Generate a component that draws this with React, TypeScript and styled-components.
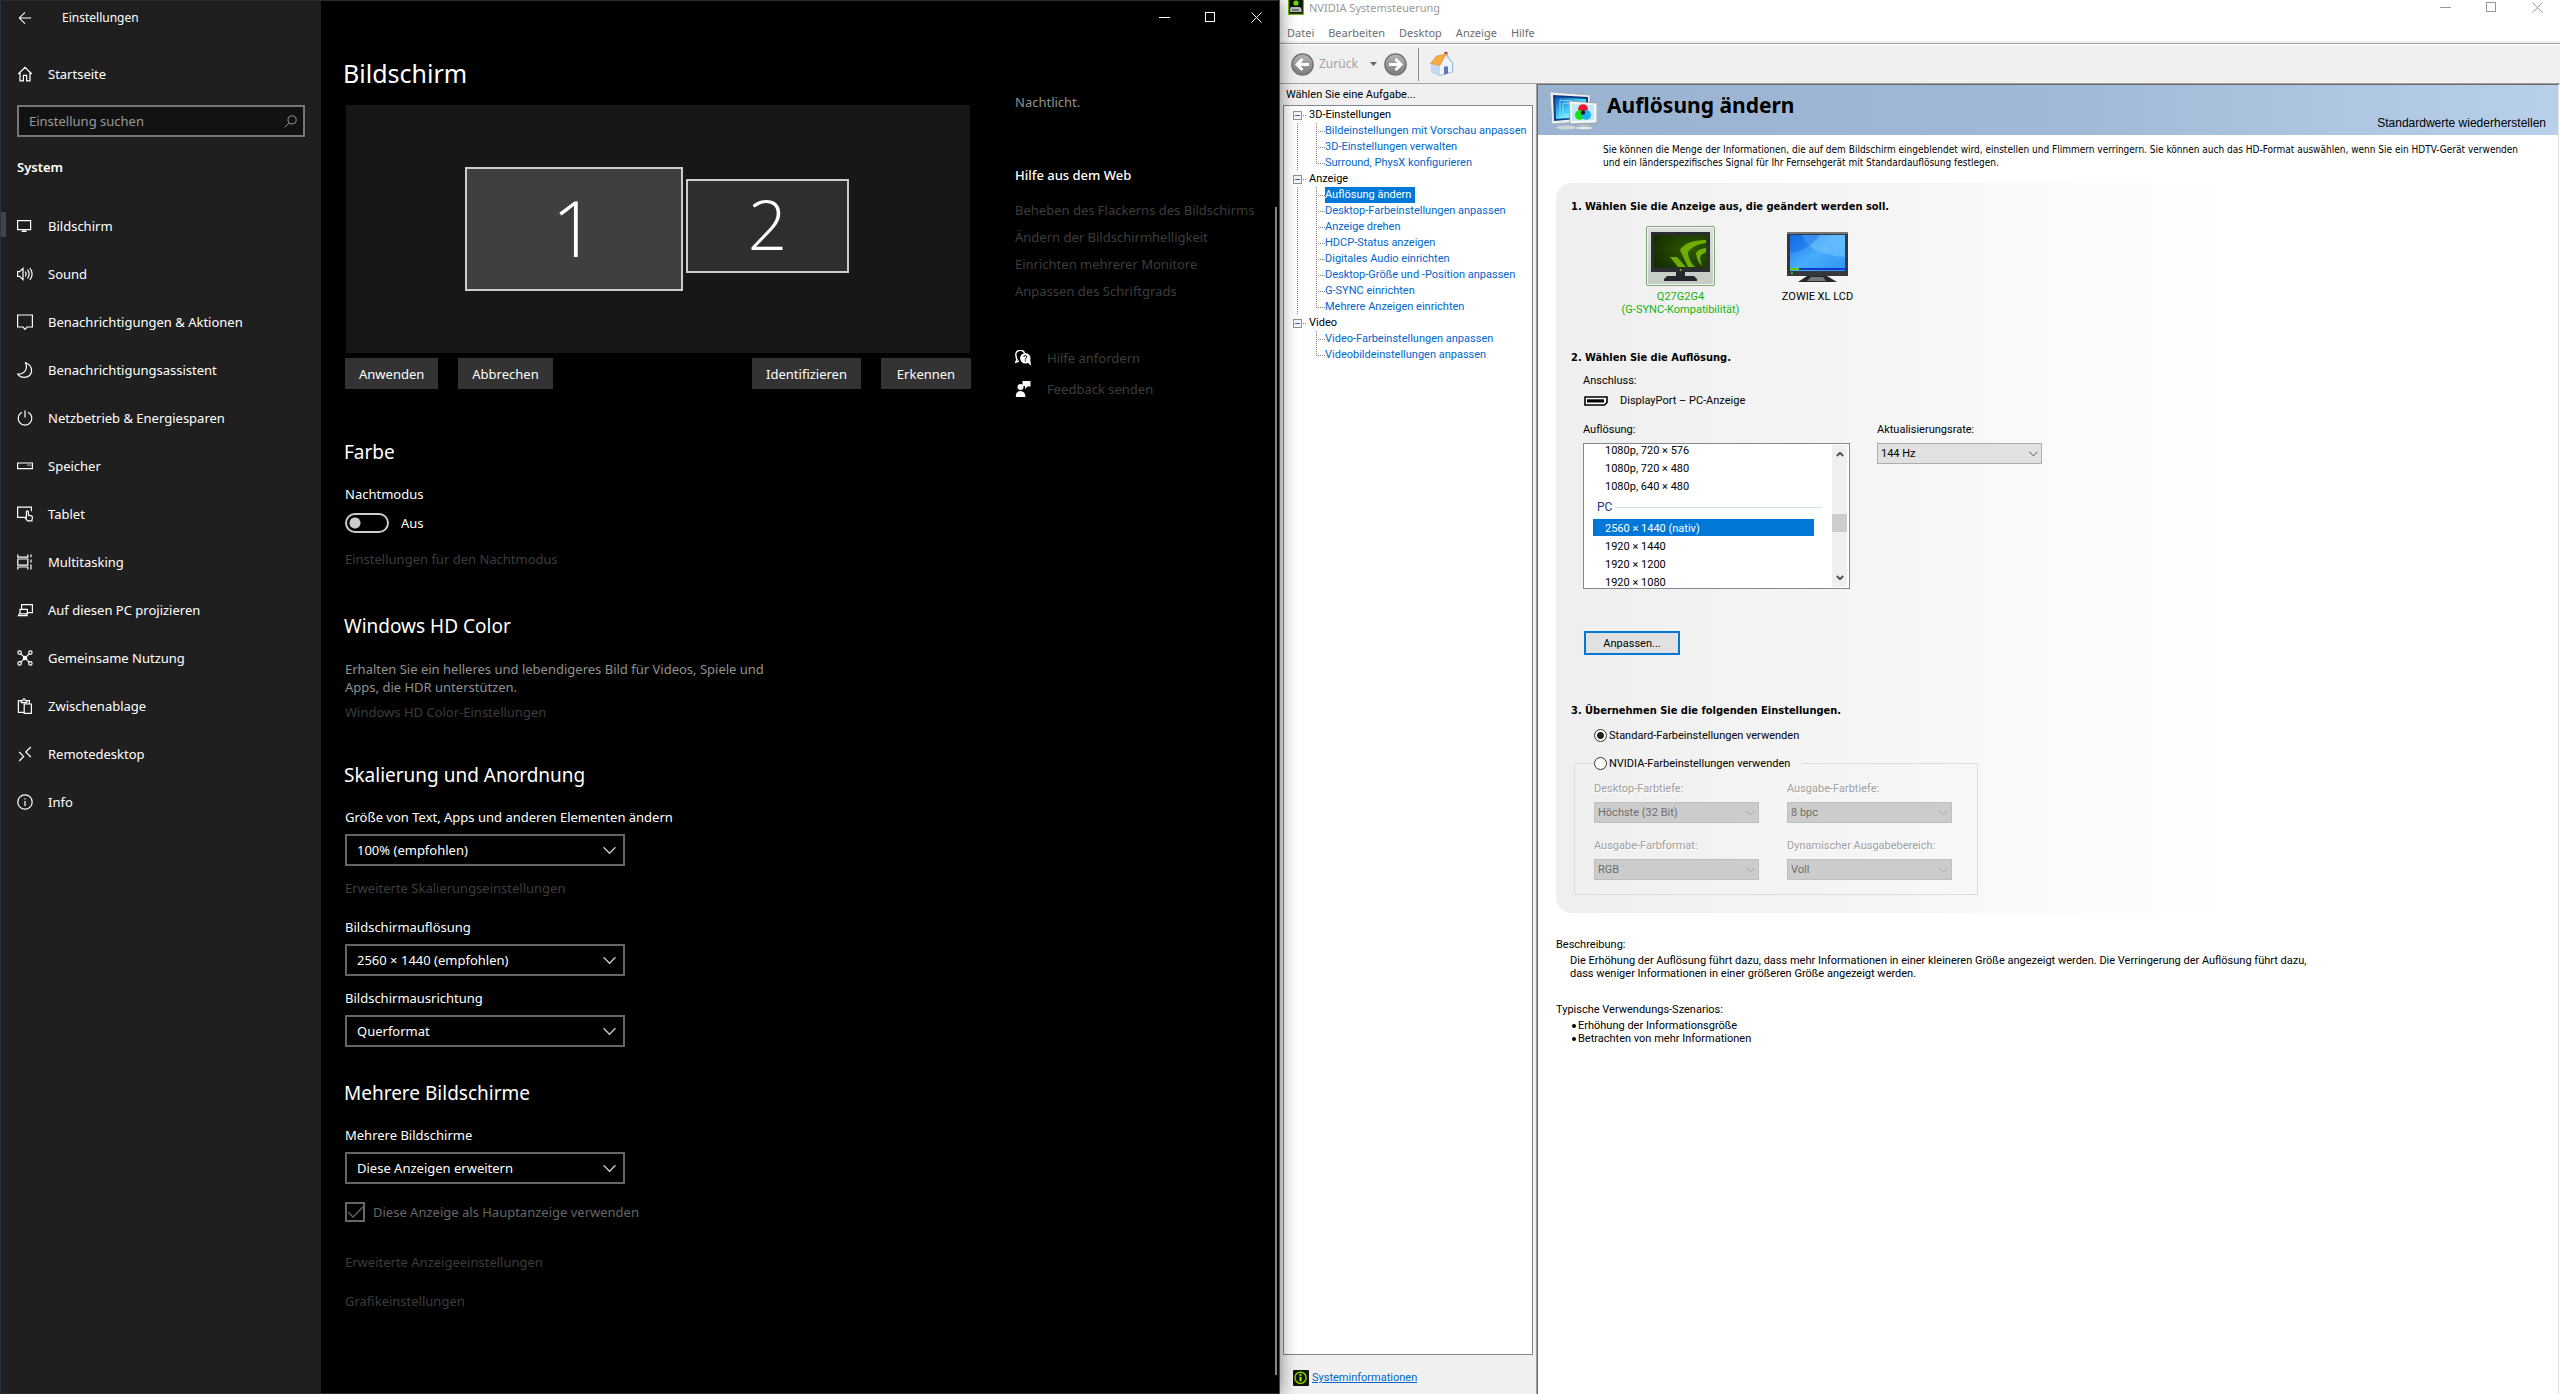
import React from "react";
import styled, { createGlobalStyle, css } from "styled-components";

const segoe = `"Noto Sans", "Open Sans", sans-serif`;
const tahoma = `Roboto, "DejaVu Sans Condensed", sans-serif`;
const tahomaAlt = `"DejaVu Sans Condensed", "DejaVu Sans", sans-serif`;
const sansSerif = `"Liberation Sans", Arial, sans-serif`;

const GlobalStyle = createGlobalStyle`
  *, *::before, *::after { box-sizing: border-box; }
  body { margin: 0; background: #fff; }
  h1, h2, h3, p, ul, fieldset, legend { margin: 0; padding: 0; font-size: inherit; font-weight: 400; }
  ul { list-style: none; }
  button, input, select { font: inherit; color: inherit; margin: 0; }
  svg { display: block; flex: none; }
`;

const Desktop = styled.div`
  display: grid;
  grid-template-columns: 1fr 1fr;
  min-height: 100vh;
`;

/* ---------- Settings window ---------- */

const SettingsWindow = styled.div`
  position: relative;
  z-index: 1;
  display: flex;
  background: #000;
  color: #fff;
  border-top: 1px solid #2b2b2b;
  border-right: 1px solid #4a4a4a;
  border-bottom: 1px solid #2b2b2b;
  box-shadow: 0 0 16px rgba(0, 0, 0, 0.5);
  font: 13px/20px ${segoe};
`;

const Sidebar = styled.aside`
  flex: none;
  width: 321px;
  background: #1f1f1f;
  border-left: 1px solid #2c3340;
`;

const SidebarTop = styled.div`
  display: flex;
  align-items: center;
  gap: 30px;
  height: 34px;
  padding-left: 17px;
  font-size: 12px;
`;

const IconButton = styled.button`
  display: flex;
  align-items: center;
  justify-content: center;
  padding: 0;
  border: 0;
  background: none;
`;

const SideLink = styled.a<{ $active?: boolean }>`
  display: flex;
  align-items: center;
  gap: 15px;
  height: 48px;
  padding-left: 11px;
  border-left: 5px solid transparent;
  color: #fff;
  text-decoration: none;
  ${(p) =>
    p.$active &&
    css`
      border-image: linear-gradient(transparent 11px, #444 11px 35px, transparent 35px) 1 / 0 0 0 5px;
    `}
`;

const HomeBlock = styled.div`
  padding: 15px 0 7px;
`;

const Search = styled.label`
  display: flex;
  align-items: center;
  height: 32px;
  margin: 0 16px;
  padding: 0 6px 0 10px;
  border: 2px solid #767676;
  background: #121212;
  color: #999;

  input {
    flex: 1;
    min-width: 0;
    padding: 0;
    border: 0;
    outline: 0;
    background: none;
  }
  input::placeholder {
    color: #999;
    opacity: 1;
  }
`;

const SideHeading = styled.h2`
  margin: 20px 16px 25px;
  font-weight: 600;
`;

const SettingsMain = styled.main`
  position: relative;
  flex: 1;
  min-width: 0;
`;

const WindowControls = styled.div<{ $color: string; $height: number }>`
  display: flex;
  justify-content: flex-end;
  height: ${(p) => p.$height}px;
  color: ${(p) => p.$color};

  button {
    width: 46px;
  }
`;

const SettingsBody = styled.div`
  display: flex;
  gap: 44px;
  padding-left: 24px;
`;

const SettingsContent = styled.div`
  flex: 0 1 626px;
  padding-top: 22px;
`;

const PageTitle = styled.h1`
  margin-left: -2px;
  font-size: 25px;
  line-height: 36px;
`;

const Canvas = styled.div`
  display: flex;
  align-items: center;
  justify-content: center;
  gap: 3px;
  height: 248px;
  margin: 14px 1px 5px;
  padding-right: 2px;
  background: #171717;
`;

const Display = styled.button<{ $primary?: boolean }>`
  width: ${(p) => (p.$primary ? 218 : 163)}px;
  height: ${(p) => (p.$primary ? 124 : 94)}px;
  margin-bottom: ${(p) => (p.$primary ? 0 : 7)}px;
  padding: 0 0 5px;
  border: 2px solid #ccc;
  background: ${(p) => (p.$primary ? "#3f3f3f" : "#2e2e2e")};
  color: #fff;
  font: 300 ${(p) => (p.$primary ? 78 : 69)}px/80px "Open Sans", ${segoe};
`;

const ButtonRow = styled.div`
  display: flex;
  gap: 20px;
`;

const Spacer = styled.span`
  flex: 1;
`;

const DarkButton = styled.button`
  min-width: 90px;
  height: 31px;
  padding: 0 14px;
  border: 0;
  background: #333;
`;

const SectionTitle = styled.h2<{ $top: number }>`
  margin-top: ${(p) => p.$top}px;
  margin-bottom: 19px;
  margin-left: -1px;
  font-size: 19px;
  line-height: 26px;
`;

const ToggleRow = styled.label`
  display: flex;
  align-items: center;
  gap: 12px;
  height: 20px;
  margin-top: 9px;
`;

const Toggle = styled.input`
  appearance: none;
  width: 44px;
  height: 20px;
  border: 2px solid #ccc;
  border-radius: 10px;
  background: radial-gradient(circle at 8px 8px, #ccc 5px, transparent 6px);
`;

const Muted = styled.p`
  padding-top: 2px;
  color: #929292;
  line-height: 18px;
`;

const QuietLink = styled.a<{ $top?: number }>`
  display: block;
  width: fit-content;
  margin-top: ${(p) => p.$top ?? 0}px;
  color: #3d3d3d;
  text-decoration: none;
`;

const DarkField = styled.label<{ $top?: number }>`
  display: block;
  margin-top: ${(p) => p.$top ?? 0}px;
`;

const DarkSelectBox = styled.span`
  position: relative;
  display: block;
  width: 280px;
  margin-top: 7px;

  select {
    appearance: none;
    display: block;
    width: 100%;
    height: 32px;
    padding: 0 36px 0 10px;
    border: 2px solid #666;
    border-radius: 0;
    background: #000;
  }
  svg {
    position: absolute;
    top: 12px;
    right: 9px;
    pointer-events: none;
    color: #ccc;
  }
`;

const CheckRow = styled.label`
  display: flex;
  align-items: center;
  gap: 8px;
  margin: 18px 0 30px;
  color: #666;
`;

const CheckBox = styled.span`
  position: relative;
  width: 20px;
  height: 20px;

  input {
    appearance: none;
    display: block;
    width: 20px;
    height: 20px;
    border: 2px solid #666;
  }
  svg {
    position: absolute;
    top: 0;
    left: 0;
  }
`;

const Help = styled.aside`
  flex: 1;
  padding-top: 58px;
`;

const HelpTitle = styled.h2`
  margin: 54px 0 15px;
  font-weight: 500;
`;

const HelpLinks = styled.div`
  display: grid;
  gap: 7px;
  margin-bottom: 47px;
`;

const HelpAction = styled.div`
  display: flex;
  align-items: center;
  gap: 16px;
  margin-bottom: 11px;
`;

const ScrollThumb = styled.div`
  position: absolute;
  top: 206px;
  right: 2px;
  bottom: 18px;
  width: 2px;
  background: #858585;
`;

/* ---------- Control panel window ---------- */

const PanelWindow = styled.div`
  display: flex;
  flex-direction: column;
  min-width: 0;
  background: #fff;
  color: #000;
  font: 11px/13px ${tahoma};
`;

const TitleBar = styled.header`
  display: flex;
  justify-content: space-between;
  height: 24px;
  padding-left: 8px;
  font: 11px/16px ${segoe};
  color: #999;
`;

const TitleText = styled.div`
  display: flex;
  gap: 5px;
`;

const MenuBar = styled.nav`
  display: flex;
  gap: 14px;
  height: 19px;
  padding-left: 7px;
  border-bottom: 2px solid #f0f0f0;
  font: 11px/17px ${segoe};

  button {
    padding: 0;
    border: 0;
    background: none;
    color: #6d6d6d;
  }
`;

const ToolBar = styled.div`
  display: flex;
  align-items: center;
  height: 41px;
  padding: 1px 11px 0;
  border-top: 1px solid #a0a0a0;
  border-bottom: 1px solid #a0a0a0;
  box-shadow: inset 0 1px #fff;
  background: #f0f0f0;
  color: #a0a0a0;
  font: 12px/18px ${segoe};
`;

const BackLabel = styled.span`
  margin: 0 12px 0 5px;
`;

const HistoryArrow = styled.svg`
  margin-right: 7px;
`;

const ToolSeparator = styled.span`
  width: 1px;
  height: 33px;
  margin: 0 11px;
  background: #8c8c8c;
`;

const PanelBody = styled.div`
  flex: 1;
  display: flex;
`;

const TaskColumn = styled.aside`
  flex: none;
  display: flex;
  flex-direction: column;
  width: 256px;
  padding: 0 3px;
  background: #f0f0f0;
`;

const TaskTitle = styled.h2`
  padding: 4px 3px 4px;
`;

const Tree = styled.ul`
  flex: 1;
  border: 1px solid #828790;
  background: #fff;
  padding-top: 1px;
`;

const TreeHead = styled.div`
  display: flex;
  align-items: center;
  height: 16px;
  padding-left: 9px;
  line-height: 16px;
`;

const Expander = styled.button`
  width: 9px;
  height: 9px;
  margin-right: 1px;
  padding: 0;
  border: 1px solid #919191;
  background: linear-gradient(#3a5bb0, #3a5bb0) center / 5px 1px no-repeat #f6f6f6;
`;

const HeadDots = styled.span`
  width: 3px;
  height: 1px;
  margin-right: 3px;
  background: repeating-linear-gradient(90deg, #808080 0 1px, transparent 1px 2px);
`;

const Branch = styled.ul<{ $trunk: boolean }>`
  ${(p) =>
    p.$trunk &&
    css`
      background: repeating-linear-gradient(#808080 0 1px, transparent 1px 2px) 13px 0 / 1px 100% no-repeat;
    `}
`;

const Leaf = styled.li`
  height: 16px;
  padding-left: 41px;
  line-height: 16px;
  background:
    repeating-linear-gradient(#808080 0 1px, transparent 1px 2px) 32px 0 / 1px 100% no-repeat,
    repeating-linear-gradient(90deg, #808080 0 1px, transparent 1px 2px) 34px 8px / 7px 1px no-repeat;

  &:last-child {
    background-size: 1px 9px, 7px 1px;
  }
`;

const LeafLink = styled.a<{ $selected?: boolean }>`
  display: block;
  width: fit-content;
  padding-right: 4px;
  color: ${(p) => (p.$selected ? "#fff" : "#0066cc")};
  background: ${(p) => (p.$selected ? "#0078d7" : "none")};
  text-decoration: none;
  white-space: nowrap;
`;

const SystemInfo = styled.div`
  display: flex;
  align-items: center;
  gap: 3px;
  height: 39px;
  padding: 6px 10px 0;

  a {
    color: #0066cc;
  }
`;

const Page = styled.main`
  flex: 1;
  min-width: 0;
  margin: 0 1px;
  border-top: 1px solid #696969;
  border-right: 1px solid #e3e3e3;
  border-left: 1px solid #696969;
  box-shadow: -1px 0 #a0a0a0;
`;

const Banner = styled.header`
  display: flex;
  align-items: flex-start;
  gap: 10px;
  height: 50px;
  padding: 6px 12px 0;
  background: linear-gradient(90deg, #9ab3d1, #9fb8d5 50%, #b9d0eb);
`;

const BannerTitle = styled.h1`
  flex: 1;
  font: 700 21px/28px "Noto Sans", sans-serif;
`;

const RestoreButton = styled.button`
  align-self: flex-end;
  padding: 0 0 5px;
  border: 0;
  background: none;
  font: 12px/14px ${sansSerif};
`;

const Intro = styled.p`
  padding: 8px 0 14px 65px;
  font: 10px/13px ${tahomaAlt};
`;

const Steps = styled.section`
  margin-left: 18px;
  padding: 17px 15px 18px;
  border-radius: 16px;
  background: linear-gradient(90deg, #efefef, #f5f5f5 30%, #fff 68%);
`;

const StepTitle = styled.h2<{ $top?: number }>`
  margin-top: ${(p) => p.$top ?? 0}px;
  font: 700 11px/13px ${tahomaAlt};
`;

const StepBody = styled.div`
  padding: 10px 0 0 12px;
`;

const Monitors = styled.div`
  display: flex;
  padding: 13px 0 0 41px;
  height: 103px;
`;

const MonitorChoice = styled.button<{ $active?: boolean }>`
  display: flex;
  flex-direction: column;
  align-items: center;
  gap: 4px;
  width: 137px;
  padding: 0;
  border: 0;
  background: none;
  color: ${(p) => (p.$active ? "#12b212" : "#000")};
`;

const MonitorFrame = styled.span<{ $active?: boolean }>`
  display: flex;
  align-items: center;
  justify-content: center;
  width: 69px;
  height: 60px;
  border: 1px solid ${(p) => (p.$active ? "#7fa573" : "transparent")};
  border-radius: 2px;
  background: ${(p) => (p.$active ? "linear-gradient(#dcdedc, #c3cbc3)" : "none")};
  box-shadow: ${(p) => (p.$active ? "inset 0 0 0 1px #f4f6f4" : "none")};
`;

const Connector = styled.div`
  display: flex;
  align-items: center;
  gap: 12px;
  margin: 7px 0 16px;
  padding-left: 1px;
`;

const Columns = styled.div<{ $gap: number }>`
  display: flex;
  align-items: flex-start;
  gap: ${(p) => p.$gap}px;
`;

const FieldLabel = styled.div`
  margin-bottom: 7px;
`;

const ListBox = styled.div`
  display: flex;
  width: 267px;
  height: 146px;
  padding-right: 2px;
  border: 1px solid #828790;
  background: #fff;
`;

const ListItems = styled.div`
  flex: 1;
  display: flex;
  flex-direction: column;
  justify-content: center;
  overflow: hidden;
`;

const Option = styled.div<{ $selected?: boolean }>`
  flex: none;
  height: 17px;
  margin: 0 18px 1px 9px;
  padding-left: 12px;
  line-height: 20px;
  color: ${(p) => (p.$selected ? "#fff" : "#000")};
  background: ${(p) => (p.$selected ? "#0078d7" : "none")};
`;

const GroupName = styled.div`
  flex: none;
  display: flex;
  align-items: center;
  gap: 4px;
  height: 24px;
  padding: 0 10px 0 13px;
  color: #1e3287;
  font-size: 12px;

  &::after {
    content: "";
    flex: 1;
    height: 1px;
    background: #d5dfea;
  }
`;

const ListScroll = styled.div`
  display: flex;
  flex-direction: column;
  align-items: center;
  width: 15px;
  margin: 1px 0;
  padding: 6px 0;
  background: #f0f0f0;
  color: #505050;
`;

const ListThumb = styled.span`
  width: 15px;
  height: 18px;
  margin: 57px 0 auto;
  background: #cdcdcd;
`;

const LightField = styled.label`
  display: block;
  width: 165px;
`;

const LightSelectBox = styled.span<{ $disabled?: boolean }>`
  position: relative;
  display: block;

  select {
    appearance: none;
    display: block;
    width: 100%;
    height: 21px;
    padding: 0 20px 0 3px;
    border: 1px solid ${(p) => (p.$disabled ? "#bfbfbf" : "#adadad")};
    border-radius: 0;
    background: ${(p) => (p.$disabled ? "#ccc" : "#e1e1e1")};
    color: ${(p) => (p.$disabled ? "#6d6d6d" : "#000")};
    opacity: 1;
  }
  svg {
    position: absolute;
    top: 8px;
    right: 4px;
    pointer-events: none;
    color: ${(p) => (p.$disabled ? "#a3a3a3" : "#444")};
  }
`;

const CustomizeButton = styled.button`
  width: 96px;
  height: 24px;
  margin: 42px 1px 0;
  padding: 0;
  border: 2px solid #0078d7;
  background: #e1e1e1;
`;

const RadioLabel = styled.label`
  display: flex;
  align-items: center;
  gap: 2px;
  height: 13px;
`;

const Radio = styled.input`
  appearance: none;
  width: 13px;
  height: 13px;
  border: 1px solid #333;
  border-radius: 50%;
  background: #fff;

  &:checked {
    background: radial-gradient(circle, #222 3px, #fff 4px);
  }
`;

const DefaultRadio = styled.div`
  padding: 12px 0 15px 23px;
`;

const ColorGroup = styled.fieldset`
  width: 404px;
  margin-left: 3px;
  padding: 0 19px 14px;
  border: 1px solid #dcdcdc;

  legend {
    padding-right: 12px;
  }
`;

const ColorGrid = styled.div`
  display: grid;
  grid-template-columns: 165px 165px;
  gap: 16px 28px;
  padding-top: 12px;

  ${FieldLabel} {
    color: #a0a0a0;
    text-shadow: 1px 1px #fff;
  }
`;

const Notes = styled.section`
  padding: 25px 18px 0;

  p {
    max-width: 780px;
    padding: 3px 0 23px 14px;
  }
  ul {
    padding: 3px 0 0 16px;
  }
  li {
    display: flex;
    align-items: center;
    gap: 2px;
  }
  li::before {
    content: "";
    width: 4px;
    height: 4px;
    border-radius: 50%;
    background: #000;
  }
`;

/* ---------- Icons ---------- */

const LineIcon = ({ children, size = 16 }: { children: React.ReactNode; size?: number }) => (
  <svg width={size} height={size} viewBox="0 0 16 16" fill="none" stroke="currentColor" strokeWidth="1.2" aria-hidden="true">
    {children}
  </svg>
);

const icons: Record<string, React.ReactNode> = {
  display: <path d="M.6 2.6h13v9H.6zM4.600 13.400h5M7.100 11.600v1.800" />,
  sound: <path d="M.6 5.6h2L6 2.4v11.2l-3.4-3.2h-2zM8.3 5.6q1.6 2.4 0 4.8M10.6 3.7q3 4.3 0 8.6M12.9 2q4.4 6 0 12" />,
  notify: <path d="M.6 1h14.8v12H10l-2 2.4L6 13H.6z" />,
  moon: <path d="M8.6.8C17 4 16.500 15 7 15.400 4 15.400 2 14 .8 12.200 8 12 11 7 8.600.8z" />,
  power: <path d="M5 2.200a6.800 6.800 0 1 0 6 0M8 .4v7.200" />,
  storage: <path d="M.6 5h14.800v5.600H.6zM10.400 7.200h1.200M12.600 7.200h1.200" />,
  tablet: <path d="M7 11.400H.6V1.200h13.800v4M9.400 12.200V6q0-1.200 1-1.200t1 1.200v3.200l3 .6q1.100.4 1 1.500l-.5 3.600h-4.200L7.600 11.400q1-.7 1.800.8z" />,
  multi: <path d="M.8.6v2.600h10V.6M.8 5h10v6.200H.8zM.8 15.600V13h10v2.600M14 .6v2.600M14 5.400v3M14 10.600v5" />,
  project: <path d="M4.600 7V2.600h10.800v8h-5M3 7.400h7.400v4.400H3zM1.400 13.600H10l-1-1.800H2.400z" />,
  share: (
    <>
      <path d="M3.600 3.600 12.400 12.400M12.400 3.600 3.600 12.400" />
      <circle cx="2.600" cy="2.600" r="1.700" />
      <circle cx="13.400" cy="2.600" r="1.700" />
      <circle cx="2.600" cy="13.400" r="1.700" />
      <circle cx="13.400" cy="13.400" r="1.700" />
      <circle cx="8" cy="8" r="1.600" />
    </>
  ),
  clipboard: <path d="M7 14.400H1.400V2.600h2.800v2h5.600v-2h2.600V6M4.400 2.600h1.400Q6 .6 7 .6t1.200 2h1.600M7.200 6h7.200v9.400H7.200z" />,
  remote: <path d="M2.200 6 6.600 10.400 2.200 15M13.800 1 8.800 6l5 5" />,
  info: (
    <>
      <circle cx="8" cy="8" r="7.200" />
      <path d="M8 7v5M8 4.200v1.200" />
    </>
  ),
};

const BackArrow = () => (
  <LineIcon size={14}>
    <path d="M15 8H1.500M8 1.500 1.500 8 8 14.500" />
  </LineIcon>
);

const Controls = ({ color, height }: { color: string; height: number }) => (
  <WindowControls $color={color} $height={height}>
    <IconButton aria-label="Minimieren">
      <svg width="11" height="11" shapeRendering="crispEdges" aria-hidden="true"><path d="M0 5.500h11" stroke="currentColor" /></svg>
    </IconButton>
    <IconButton aria-label="Maximieren">
      <svg width="11" height="11" fill="none" shapeRendering="crispEdges" aria-hidden="true"><path d="M.5.5h9v9h-9z" stroke="currentColor" /></svg>
    </IconButton>
    <IconButton aria-label="Schließen">
      <svg width="11" height="11" aria-hidden="true"><path d="M.5.5l10 10M10.500.5l-10 10" stroke="currentColor" /></svg>
    </IconButton>
  </WindowControls>
);

const HelpIcon = () => (
  <svg width="16" height="16" viewBox="0 0 16 16" aria-hidden="true">
    <path d="M9.500 3A4.500 4.500 0 0 0 1.200 6.500Q1.200 8.400 2 9.400L.8 12.200 4 11" fill="none" stroke="#fff" strokeWidth="1.500" />
    <circle cx="10.300" cy="8.200" r="5.200" fill="#fff" />
    <path d="m12 12 4 3.800-.6-5.500z" fill="#fff" />
    <path d="M8.800 7q0-1.500 1.500-1.500T11.800 7q0 .9-1.500 1.700v.8M10.300 10.300v1.200" fill="none" stroke="#000" />
  </svg>
);

const FeedbackIcon = () => (
  <svg width="16" height="16" viewBox="0 0 16 16" fill="#fff" aria-hidden="true">
    <path d="M7.500 0h8v5.500h-3L10 8V5H7.500z" />
    <circle cx="5.500" cy="6" r="3" />
    <path d="M.8 16q0-6 4.700-6t5 6z" />
  </svg>
);

const Chevron = ({ width, height }: { width: number; height: number }) => (
  <svg width={width} height={height} viewBox="0 0 12 8" fill="none" stroke="currentColor" strokeWidth="1.200" aria-hidden="true">
    <path d="M.5 1 6 6.500 11.500 1" />
  </svg>
);

const RoundArrow = ({ forward }: { forward?: boolean }) => (
  <svg width="23" height="23" viewBox="0 0 23 23" aria-hidden="true">
    <defs>
      <linearGradient id="steel" x1="0" y1="0" x2="0" y2="1">
        <stop offset="0" stopColor="#b5b5b5" />
        <stop offset="1" stopColor="#7b7b7b" />
      </linearGradient>
    </defs>
    <circle cx="11.500" cy="11.500" r="10.600" fill="url(#steel)" stroke="#707070" strokeWidth="1.400" />
    <path
      d={forward ? "M5 11.500h12M11.500 6l5.500 5.500-5.500 5.500" : "M18 11.500H6M11.500 6 6 11.500l5.500 5.500"}
      fill="none"
      stroke="#fff"
      strokeWidth="3"
    />
  </svg>
);

const HouseIcon = () => (
  <svg width="24" height="24" viewBox="0 0 24 24" aria-hidden="true">
    <path d="M14.500 0h3v7h-3z" fill="#b8341c" />
    <path d="M2 12v8l8 3.500 12.500-3.500v-9L16 3z" fill="#eef4fd" stroke="#8aa6d4" strokeWidth=".8" />
    <path d="M2 12v8l8 3.500V13z" fill="#c3d8f5" />
    <path d="M14 14.500h4v7l-4 1.100z" fill="#5a78b4" />
    <path d="M.5 11.500 6.500 4 16 2 10 13.500z" fill="#f8ab42" stroke="#e08a22" strokeWidth=".6" />
    <path d="M16 2l7.500 10.500" stroke="#b9c7dd" strokeWidth="1.400" />
  </svg>
);

const AppIcon = () => (
  <svg width="16" height="15" viewBox="0 0 16 15" aria-hidden="true">
    <path d="M0-3h16v18H0z" fill="#6cb800" />
    <path d="M1.200-3h13.600v16.700H1.200z" fill="#111" />
    <circle cx="8" cy="3" r="2.600" fill="#5fe000" />
    <path d="M3 7h9l1.500 2v3H2V9z" fill="#bbb" />
    <path d="M4 9.500h7v1H4z" fill="#333" />
  </svg>
);

const InfoBadge = () => (
  <svg width="16" height="16" viewBox="0 0 16 16" aria-hidden="true">
    <rect width="16" height="16" rx="1" fill="#10160a" />
    <circle cx="7.500" cy="7.800" r="5.600" fill="none" stroke="#8fd400" strokeWidth="1.400" />
    <path d="M7.500 6.800v4.400M7.500 4v1.700" stroke="#b6f000" strokeWidth="2" />
  </svg>
);

const BannerIcon = () => (
  <svg width="47" height="40" viewBox="0 0 47 40" aria-hidden="true">
    <defs>
      <linearGradient id="glass" x1="0" y1="0" x2="1" y2="1">
        <stop offset="0" stopColor="#0b4fb8" />
        <stop offset=".5" stopColor="#3fd2fa" />
        <stop offset="1" stopColor="#d9f7ff" />
      </linearGradient>
    </defs>
    <path d="M0 1 40 4v26L2 33z" fill="#eef1f4" stroke="#9aa3ab" strokeWidth=".7" />
    <path d="M3 4 38 6v21L4 30z" fill="#123a80" />
    <path d="M5 6 36 8v18L6 28z" fill="url(#glass)" />
    <path d="M10 9l12 1v15l-12 1zM13 12l7 .5V23l-7 1z" fill="none" stroke="#a8ecff" strokeWidth=".8" />
    <ellipse cx="16" cy="36.500" rx="10" ry="2" fill="#cfd4d8" />
    <path d="M19 10 47 12v20L20 33z" fill="#f3f5f7" stroke="#8b949c" strokeWidth=".8" />
    <path d="M22 13l22 1v15l-22 1z" fill="#bfe9f8" />
    <circle cx="33" cy="18" r="4.800" fill="#f0142c" />
    <circle cx="29.800" cy="24" r="4.800" fill="#15e215" />
    <circle cx="36.200" cy="24" r="4.800" fill="#1db4f2" />
    <circle cx="33" cy="21.500" r="2.200" fill="#2a1438" />
    <path d="M30 33h8l1 3h-10z" fill="#b7bdc3" />
    <ellipse cx="34" cy="37" rx="9" ry="1.800" fill="#e4e7ea" stroke="#9aa3ab" strokeWidth=".5" />
  </svg>
);

const GreenMonitor = () => (
  <svg width="59" height="51" viewBox="0 0 59 51" aria-hidden="true">
    <defs>
      <radialGradient id="green" cx=".7" cy=".45" r=".8">
        <stop offset="0" stopColor="#2f5a00" />
        <stop offset="1" stopColor="#142c00" />
      </radialGradient>
    </defs>
    <path d="M0 1h59v40H0z" fill="#2a2d31" />
    <path d="M3 4h53v33H3z" fill="url(#green)" />
    <path d="M55 9q-20 0-26 10l8 17h7q-7-7-7-15 6-8 18-9z" fill="#6fae00" />
    <path d="M55 17q-8 1-10 5 1 9 6 13-3-8-1-11l5-3z" fill="#6fae00" />
    <path d="M19 26h7l9 10h-8z" fill="#6fae00" />
    <circle cx="29.500" cy="39" r=".8" fill="#e8f020" />
    <path d="M25 41h9v4h-9zM16 45h27l3 3v2H13v-2z" fill="#24272b" />
  </svg>
);

const BlueMonitor = () => (
  <svg width="61" height="51" viewBox="0 0 61 51" aria-hidden="true">
    <defs>
      <linearGradient id="blue" x1="0" y1="0" x2="1" y2="1">
        <stop offset="0" stopColor="#1272ea" />
        <stop offset=".5" stopColor="#48adfb" />
        <stop offset="1" stopColor="#2b95f5" />
      </linearGradient>
    </defs>
    <path d="M0 1h61v44H0z" fill="#35383c" />
    <path d="M0 1h61v2H0z" fill="#777" />
    <path d="M3 4h55v36H3z" fill="url(#blue)" />
    <path d="M15 4q3 10 14 15 14 6 29 7V4z" fill="#7cc6fd" opacity=".55" />
    <path d="M3 22q18-2 30-18H3z" fill="#0e62e2" opacity=".4" />
    <path d="M3 37h55v2H3z" fill="#1238cf" />
    <path d="M3 37h9v2H3z" fill="#5ed000" />
    <path d="M4 41.500h2v1.500H4z" fill="#2fe02f" />
    <path d="M20 45h20l10 6H11z" fill="#26282b" />
    <path d="m24 46 12 0 3 4H20z" fill="#74787c" />
  </svg>
);

const PortIcon = () => (
  <svg width="24" height="10" viewBox="0 0 24 10" aria-hidden="true">
    <path d="M1 1h22v5.500L20.500 9H1z" fill="#fff" stroke="#000" strokeWidth="1.600" />
    <path d="M3 3.300h17v3.200H3z" fill="#000" />
  </svg>
);

/* ---------- Data ---------- */

const navItems = [
  ["display", "Bildschirm"],
  ["sound", "Sound"],
  ["notify", "Benachrichtigungen & Aktionen"],
  ["moon", "Benachrichtigungsassistent"],
  ["power", "Netzbetrieb & Energiesparen"],
  ["storage", "Speicher"],
  ["tablet", "Tablet"],
  ["multi", "Multitasking"],
  ["project", "Auf diesen PC projizieren"],
  ["share", "Gemeinsame Nutzung"],
  ["clipboard", "Zwischenablage"],
  ["remote", "Remotedesktop"],
  ["info", "Info"],
];

const tree = [
  {
    name: "3D-Einstellungen",
    items: ["Bildeinstellungen mit Vorschau anpassen", "3D-Einstellungen verwalten", "Surround, PhysX konfigurieren"],
  },
  {
    name: "Anzeige",
    items: [
      "Auflösung ändern",
      "Desktop-Farbeinstellungen anpassen",
      "Anzeige drehen",
      "HDCP-Status anzeigen",
      "Digitales Audio einrichten",
      "Desktop-Größe und -Position anpassen",
      "G-SYNC einrichten",
      "Mehrere Anzeigen einrichten",
    ],
  },
  { name: "Video", items: ["Video-Farbeinstellungen anpassen", "Videobildeinstellungen anpassen"] },
];

/* ---------- Composed controls ---------- */

const DarkSelect = ({ label, value, top }: { label: string; value: string; top?: number }) => (
  <DarkField $top={top}>
    {label}
    <DarkSelectBox>
      <select defaultValue={value}>
        <option>{value}</option>
      </select>
      <Chevron width={13} height={9} />
    </DarkSelectBox>
  </DarkField>
);

const LightSelect = ({ label, value, disabled }: { label: string; value: string; disabled?: boolean }) => (
  <LightField>
    <FieldLabel>{label}</FieldLabel>
    <LightSelectBox $disabled={disabled}>
      <select defaultValue={value} disabled={disabled}>
        <option>{value}</option>
      </select>
      <Chevron width={9} height={6} />
    </LightSelectBox>
  </LightField>
);

const Settings = () => (
  <SettingsWindow>
    <Sidebar>
      <SidebarTop>
        <IconButton aria-label="Zurück">
          <BackArrow />
        </IconButton>
        Einstellungen
      </SidebarTop>
      <HomeBlock>
        <SideLink href="#start">
          <LineIcon>
            <path d="M1.200 8 8 1.400 14.800 8M3 6.600v8.200h3.400V9.400h3.200v5.400H13V6.600" />
          </LineIcon>
          Startseite
        </SideLink>
      </HomeBlock>
      <Search>
        <input type="text" placeholder="Einstellung suchen" aria-label="Einstellung suchen" />
        <LineIcon size={13}>
          <circle cx="10" cy="6" r="5" />
          <path d="M6.500 9.500 .8 15.200" />
        </LineIcon>
      </Search>
      <SideHeading>System</SideHeading>
      <nav>
        {navItems.map(([icon, name], i) => (
          <SideLink key={name} href={`#${icon}`} $active={i === 0}>
            <LineIcon>{icons[icon]}</LineIcon>
            {name}
          </SideLink>
        ))}
      </nav>
    </Sidebar>
    <SettingsMain>
      <Controls color="#fff" height={32} />
      <SettingsBody>
        <SettingsContent>
          <PageTitle>Bildschirm</PageTitle>
          <Canvas>
            <Display $primary>1</Display>
            <Display>2</Display>
          </Canvas>
          <ButtonRow>
            <DarkButton>Anwenden</DarkButton>
            <DarkButton>Abbrechen</DarkButton>
            <Spacer />
            <DarkButton>Identifizieren</DarkButton>
            <DarkButton>Erkennen</DarkButton>
          </ButtonRow>

          <SectionTitle $top={50}>Farbe</SectionTitle>
          <div id="night-mode">Nachtmodus</div>
          <ToggleRow>
            <Toggle type="checkbox" role="switch" aria-describedby="night-mode" />
            Aus
          </ToggleRow>
          <QuietLink href="#night" $top={16}>Einstellungen für den Nachtmodus</QuietLink>

          <SectionTitle $top={44}>Windows HD Color</SectionTitle>
          <Muted>
            Erhalten Sie ein helleres und lebendigeres Bild für Videos, Spiele und
            <br />
            Apps, die HDR unterstützen.
          </Muted>
          <QuietLink href="#hd" $top={6}>Windows HD Color-Einstellungen</QuietLink>

          <SectionTitle $top={40}>Skalierung und Anordnung</SectionTitle>
          <DarkSelect label="Größe von Text, Apps und anderen Elementen ändern" value="100% (empfohlen)" />
          <QuietLink href="#scale" $top={12}>Erweiterte Skalierungseinstellungen</QuietLink>
          <DarkSelect top={19} label="Bildschirmauflösung" value="2560 × 1440 (empfohlen)" />
          <DarkSelect top={12} label="Bildschirmausrichtung" value="Querformat" />

          <SectionTitle $top={33}>Mehrere Bildschirme</SectionTitle>
          <DarkSelect label="Mehrere Bildschirme" value="Diese Anzeigen erweitern" />
          <CheckRow>
            <CheckBox>
              <input type="checkbox" defaultChecked disabled />
              <svg width="20" height="20" fill="none" stroke="#666" strokeWidth="1.300" aria-hidden="true">
                <path d="m3 10 5 5L18 5" />
              </svg>
            </CheckBox>
            Diese Anzeige als Hauptanzeige verwenden
          </CheckRow>
          <QuietLink href="#advanced">Erweiterte Anzeigeeinstellungen</QuietLink>
          <QuietLink href="#graphics" $top={19}>Grafikeinstellungen</QuietLink>
        </SettingsContent>
        <Help>
          <Muted>Nachtlicht.</Muted>
          <HelpTitle>Hilfe aus dem Web</HelpTitle>
          <HelpLinks>
            <QuietLink href="#h1">Beheben des Flackerns des Bildschirms</QuietLink>
            <QuietLink href="#h2">Ändern der Bildschirmhelligkeit</QuietLink>
            <QuietLink href="#h3">Einrichten mehrerer Monitore</QuietLink>
            <QuietLink href="#h4">Anpassen des Schriftgrads</QuietLink>
          </HelpLinks>
          <HelpAction>
            <HelpIcon />
            <QuietLink href="#help">Hilfe anfordern</QuietLink>
          </HelpAction>
          <HelpAction>
            <FeedbackIcon />
            <QuietLink href="#feedback">Feedback senden</QuietLink>
          </HelpAction>
        </Help>
      </SettingsBody>
      <ScrollThumb />
    </SettingsMain>
  </SettingsWindow>
);

const ControlPanel = () => (
  <PanelWindow>
    <TitleBar>
      <TitleText>
        <AppIcon />
        NVIDIA Systemsteuerung
      </TitleText>
      <Controls color="#999" height={15} />
    </TitleBar>
    <MenuBar>
      {["Datei", "Bearbeiten", "Desktop", "Anzeige", "Hilfe"].map((m) => (
        <button key={m}>{m}</button>
      ))}
    </MenuBar>
    <ToolBar>
      <IconButton aria-label="Zurück">
        <RoundArrow />
      </IconButton>
      <BackLabel>Zurück</BackLabel>
      <HistoryArrow width="7" height="4" fill="#666" aria-hidden="true">
        <path d="M0 0h7L3.500 4z" />
      </HistoryArrow>
      <IconButton aria-label="Vorwärts">
        <RoundArrow forward />
      </IconButton>
      <ToolSeparator />
      <IconButton aria-label="Startseite">
        <HouseIcon />
      </IconButton>
    </ToolBar>
    <PanelBody>
      <TaskColumn>
        <TaskTitle>Wählen Sie eine Aufgabe...</TaskTitle>
        <Tree>
          {tree.map((group, g) => (
            <li key={group.name}>
              <TreeHead>
                <Expander aria-label={`${group.name} einklappen`} />
                <HeadDots />
                {group.name}
              </TreeHead>
              <Branch $trunk={g < tree.length - 1}>
                {group.items.map((item) => (
                  <Leaf key={item}>
                    <LeafLink href="#task" $selected={item === "Auflösung ändern"}>{item}</LeafLink>
                  </Leaf>
                ))}
              </Branch>
            </li>
          ))}
        </Tree>
        <SystemInfo>
          <InfoBadge />
          <a href="#sysinfo">Systeminformationen</a>
        </SystemInfo>
      </TaskColumn>
      <Page>
        <Banner>
          <BannerIcon />
          <BannerTitle>Auflösung ändern</BannerTitle>
          <RestoreButton>Standardwerte wiederherstellen</RestoreButton>
        </Banner>
        <Intro>
          Sie können die Menge der Informationen, die auf dem Bildschirm eingeblendet wird, einstellen und Flimmern verringern. Sie
          können auch das HD-Format auswählen, wenn Sie ein HDTV-Gerät verwenden
          <br />
          und ein länderspezifisches Signal für Ihr Fernsehgerät mit Standardauflösung festlegen.
        </Intro>
        <Steps>
          <StepTitle>1. Wählen Sie die Anzeige aus, die geändert werden soll.</StepTitle>
          <Monitors>
            <MonitorChoice $active>
              <MonitorFrame $active>
                <GreenMonitor />
              </MonitorFrame>
              <span>
                Q27G2G4
                <br />
                (G-SYNC-Kompatibilität)
              </span>
            </MonitorChoice>
            <MonitorChoice>
              <MonitorFrame>
                <BlueMonitor />
              </MonitorFrame>
              <span>ZOWIE XL LCD</span>
            </MonitorChoice>
          </Monitors>

          <StepTitle $top={35}>2. Wählen Sie die Auflösung.</StepTitle>
          <StepBody>
            <div>Anschluss:</div>
            <Connector>
              <PortIcon />
              DisplayPort – PC-Anzeige
            </Connector>
            <Columns $gap={27}>
              <div>
                <FieldLabel id="resolution">Auflösung:</FieldLabel>
                <ListBox>
                  <ListItems role="listbox" aria-labelledby="resolution">
                    <Option role="option">1080p, 720 × 576</Option>
                    <Option role="option">1080p, 720 × 480</Option>
                    <Option role="option">1080p, 640 × 480</Option>
                    <GroupName>PC</GroupName>
                    <Option role="option" aria-selected $selected>2560 × 1440 (nativ)</Option>
                    <Option role="option">1920 × 1440</Option>
                    <Option role="option">1920 × 1200</Option>
                    <Option role="option">1920 × 1080</Option>
                  </ListItems>
                  <ListScroll>
                    <svg width="8" height="6" fill="none" stroke="currentColor" strokeWidth="2" aria-hidden="true"><path d="M.8 5 4 1.800 7.200 5" /></svg>
                    <ListThumb />
                    <svg width="8" height="6" fill="none" stroke="currentColor" strokeWidth="2" aria-hidden="true"><path d="M.8 1 4 4.200 7.200 1" /></svg>
                  </ListScroll>
                </ListBox>
              </div>
              <LightSelect label="Aktualisierungsrate:" value="144 Hz" />
            </Columns>
            <CustomizeButton>Anpassen...</CustomizeButton>
          </StepBody>

          <StepTitle $top={49}>3. Übernehmen Sie die folgenden Einstellungen.</StepTitle>
          <DefaultRadio>
            <RadioLabel>
              <Radio type="radio" name="color" defaultChecked />
              Standard-Farbeinstellungen verwenden
            </RadioLabel>
          </DefaultRadio>
          <ColorGroup>
            <legend>
              <RadioLabel>
                <Radio type="radio" name="color" />
                NVIDIA-Farbeinstellungen verwenden
              </RadioLabel>
            </legend>
            <ColorGrid>
              <LightSelect disabled label="Desktop-Farbtiefe:" value="Höchste (32 Bit)" />
              <LightSelect disabled label="Ausgabe-Farbtiefe:" value="8 bpc" />
              <LightSelect disabled label="Ausgabe-Farbformat:" value="RGB" />
              <LightSelect disabled label="Dynamischer Ausgabebereich:" value="Voll" />
            </ColorGrid>
          </ColorGroup>
        </Steps>
        <Notes>
          <h3>Beschreibung:</h3>
          <p>
            Die Erhöhung der Auflösung führt dazu, dass mehr Informationen in einer kleineren Größe angezeigt werden. Die Verringerung
            der Auflösung führt dazu,
            <br />
            dass weniger Informationen in einer größeren Größe angezeigt werden.
          </p>
          <h3>Typische Verwendungs-Szenarios:</h3>
          <ul>
            <li>Erhöhung der Informationsgröße</li>
            <li>Betrachten von mehr Informationen</li>
          </ul>
        </Notes>
      </Page>
    </PanelBody>
  </PanelWindow>
);

export default function App() {
  return (
    <>
      <GlobalStyle />
      <Desktop>
        <Settings />
        <ControlPanel />
      </Desktop>
    </>
  );
}
